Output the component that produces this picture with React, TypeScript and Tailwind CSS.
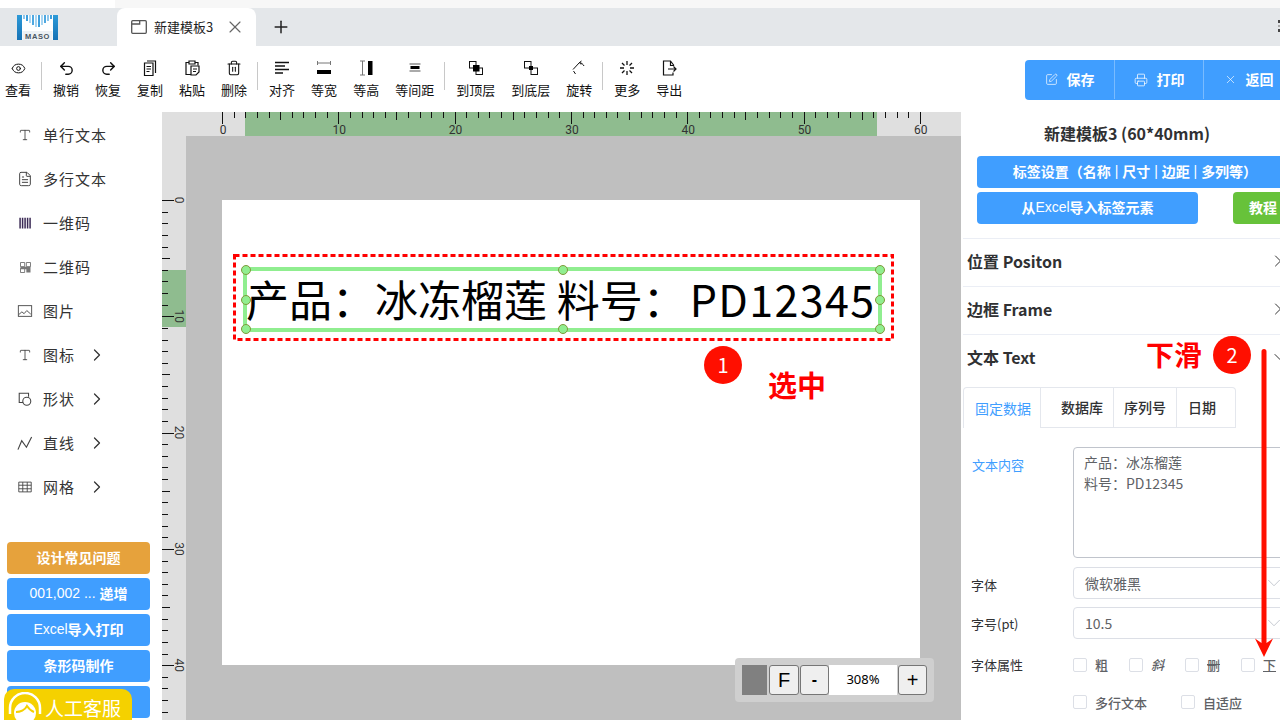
import { ChevronDown, ChevronRight, Eye, FileText, Plus, Printer, Redo2, SquarePen, Trash2, Type, Undo2, X } from "lucide-react";
import type { ReactNode } from "react";

const font = "font-['Noto_Sans_CJK_SC','Noto_Sans',sans-serif]";

function Svg({ children, size = 18 }: { children: ReactNode; size?: number }) {
  return (
    <svg width={size} height={size} viewBox="0 0 18 18" fill="none" stroke="currentColor" strokeWidth="1.2">
      {children}
    </svg>
  );
}

function Latin({ children }: { children: ReactNode }) {
  return <span className="font-['Liberation_Sans',sans-serif] font-normal">{children}</span>;
}

const toolIcons: Record<string, ReactNode> = {
  查看: <Eye size={15} strokeWidth={1.6} />,
  撤销: <Undo2 size={17} strokeWidth={2} />,
  恢复: <Redo2 size={17} strokeWidth={2} />,
  复制: (
    <Svg>
      <path d="M6 2h8.500v12M3.500 4h8.500v12.500H3.500z" />
      <path d="M5.500 7.500h4.500M5.500 10h4.500M5.500 12.500h3" />
    </Svg>
  ),
  粘贴: (
    <Svg>
      <path d="M6 3.500H3v12h5M12 3.500h3v3M6 2h6v3H6z" />
      <path d="M8 7h8v6l-3 3H8zM10 10h4M10 12.500h3" />
    </Svg>
  ),
  删除: <Trash2 size={16} strokeWidth={1.6} />,
  对齐: (
    <Svg>
      <path d="M2 3.500h14M2 7h10M2 10.500h14M2 14h8" strokeWidth="1.600" />
    </Svg>
  ),
  等宽: (
    <Svg>
      <path d="M2.500 2v4M15.500 2v4M2.500 4h13" strokeWidth="1" stroke="#777" />
      <rect x="2" y="11" width="14" height="4" fill="#000" stroke="none" />
    </Svg>
  ),
  等高: (
    <Svg>
      <path d="M3 2h5M3 16h5M5.500 2v14" strokeWidth="1" stroke="#777" />
      <rect x="11" y="2" width="4.500" height="14" fill="#000" stroke="none" />
    </Svg>
  ),
  等间距: (
    <Svg>
      <rect x="3.500" y="4" width="11" height="2" fill="#aaa" stroke="none" />
      <rect x="4.500" y="7" width="9" height="3" fill="#000" stroke="none" />
      <rect x="3.500" y="11" width="11" height="2" fill="#aaa" stroke="none" />
    </Svg>
  ),
  到顶层: (
    <Svg>
      <rect x="2.500" y="2.500" width="6.500" height="6.500" strokeWidth="1" />
      <rect x="9" y="9" width="6.500" height="6.500" strokeWidth="1" />
      <rect x="6" y="6" width="6.500" height="6.500" fill="#000" stroke="none" />
    </Svg>
  ),
  到底层: (
    <Svg>
      <rect x="2.500" y="2.500" width="6.500" height="6.500" strokeWidth="1" />
      <rect x="9" y="9" width="6.500" height="6.500" strokeWidth="1" />
      <rect x="7" y="7" width="4" height="4" fill="#000" stroke="none" />
    </Svg>
  ),
  旋转: (
    <Svg>
      <path d="M3 10.500L9.500 3.500c2 .5 3.500 1.500 4.500 3.500M5.500 15L3.500 12M11.500 2l-2 1.500 1.500 2" strokeWidth="1" />
    </Svg>
  ),
  更多: (
    <Svg>
      <path d="M9 2v4M9 12v4M2 9h4M12 9h4M4 4l2.500 2.500M11.500 11.500L14 14M14 4l-2.500 2.500M6.500 11.500L4 14" strokeWidth="1.300" />
    </Svg>
  ),
  导出: (
    <Svg>
      <path d="M14 6.500L10.500 2H3.500v14H13v-2.500M10.500 2v4.500H14" />
      <path d="M8 10h8M13.500 7.500l2.500 2.500-2.500 2.500" />
    </Svg>
  ),
};

const toolGroups = [["查看"], ["撤销", "恢复", "复制", "粘贴", "删除"], ["对齐", "等宽", "等高", "等间距"], ["到顶层", "到底层", "旋转"], ["更多", "导出"]];

function Toolbar() {
  return (
    <div className="flex h-[66px] bg-white">
      <div className="ml-[-3px] flex items-start pt-[10px]">
        {toolGroups.map((group, i) => (
          <div key={group[0]} className="flex items-center">
            {i > 0 && <div className="ml-[2px] mr-[3px] h-[28px] w-px -translate-y-[2px] bg-[#c8c8c8]" />}
            {group.map((name) => (
              <div key={name} className="mx-2 flex flex-col items-center">
                <div className="flex h-[24px] items-center justify-center text-[#111]">{toolIcons[name]}</div>
                <div className="mt-[1px] text-[13px] leading-[18px] text-[#111]">{name}</div>
              </div>
            ))}
          </div>
        ))}
      </div>
      <div className="ml-auto mt-[14px] flex h-[40px] w-[255px] shrink-0 overflow-hidden rounded-l-[4px] bg-[#409eff] pb-[1px] text-[14px] font-bold text-white">
        <div className="flex w-[90px] shrink-0 items-center justify-center gap-[9px] border-r border-[#79bbff]">
          <SquarePen size={13} strokeWidth={1.3} />
          保存
        </div>
        <div className="flex w-[89px] shrink-0 items-center justify-center gap-[9px] border-r border-[#79bbff]">
          <Printer size={14} strokeWidth={1.3} />
          打印
        </div>
        <div className="flex w-[89px] shrink-0 items-center justify-center gap-[9px]">
          <X size={13} strokeWidth={1.2} />
          返回
        </div>
      </div>
    </div>
  );
}

const sideItems: { name: string; icon: ReactNode; more?: boolean }[] = [
  { name: "单行文本", icon: <Type size={14} strokeWidth={1.5} /> },
  { name: "多行文本", icon: <FileText size={16} strokeWidth={1.5} /> },
  {
    name: "一维码",
    icon: (
      <Svg size={15}>
        <path d="M2.500 2v13M5.500 2v13M8.500 2v13M11.500 2v13M14.500 2v13" strokeWidth="1.800" stroke="#3b2a55" />
      </Svg>
    ),
  },
  {
    name: "二维码",
    icon: (
      <Svg size={15}>
        <path d="M3 3h5v5H3zM10 3h5v5h-5zM3 10h5v5H3z" strokeWidth="1" stroke="#666" />
        <path d="M3 8h12v3H3zM10 11h5v4h-5z" fill="#777" stroke="none" />
      </Svg>
    ),
  },
  {
    name: "图片",
    icon: (
      <Svg size={16}>
        <rect x="1.500" y="3" width="15" height="12" strokeWidth="1" />
        <path d="M2 13l3.500-3 2.500 2 3-3.500 4.500 4" strokeWidth="1" />
      </Svg>
    ),
  },
  { name: "图标", icon: <Type size={14} strokeWidth={1.5} />, more: true },
  {
    name: "形状",
    icon: (
      <Svg size={16}>
        <path d="M7 13H2.500V2.500H13v4" />
        <circle cx="11" cy="11.500" r="4.500" />
      </Svg>
    ),
    more: true,
  },
  {
    name: "直线",
    icon: (
      <Svg size={17}>
        <path d="M1 15.500L5 6l5 7 5.500-11" />
      </Svg>
    ),
    more: true,
  },
  {
    name: "网格",
    icon: (
      <Svg size={16}>
        <path d="M2 3.500h14v11H2zM2 7h14M2 11h14M6.500 3.500v11M11.500 3.500v11" strokeWidth="1" />
      </Svg>
    ),
    more: true,
  },
];

function Sidebar() {
  const sideButton = "flex h-[32px] items-center justify-center rounded-[4px] bg-[#409eff] pb-[2px] text-[14px] font-bold text-white";
  return (
    <div className="relative flex w-[162px] shrink-0 flex-col bg-white">
      <div className="pt-[1px]">
        {sideItems.map((item) => (
          <div key={item.name} className="flex h-[44px] items-center text-[15px] text-[#333]">
            <div className="flex w-[43px] shrink-0 justify-center pl-[7px] text-[#444]">{item.icon}</div>
            <span className="tracking-[1px]">{item.name}</span>
            {item.more && <ChevronRight size={20} strokeWidth={1.5} className="ml-[12px]" />}
          </div>
        ))}
      </div>
      <div className="mt-auto flex w-[157px] flex-col gap-1 pb-[2px] pl-[7px] pr-[7px]">
        <div className={`${sideButton} !bg-[#e6a23c]`}>设计常见问题</div>
        <div className={sideButton}>
          <Latin>001,002 ...&nbsp;</Latin>递增
        </div>
        <div className={sideButton}>
          <Latin>Excel</Latin>导入打印
        </div>
        <div className={sideButton}>条形码制作</div>
        <div className={sideButton} />
      </div>
      <div className="absolute bottom-0 left-[4px] flex h-[31px] w-[128px] items-start rounded-t-[10px] bg-[#f5d100] pl-[3px] text-[19px] leading-[19px] text-white">
        <svg className="mt-[3px] shrink-0" width="36" height="28" viewBox="0 0 36 28" fill="none" stroke="#fff" strokeWidth="2.500">
          <path d="M3 22V16a15 15 0 0 1 30 0v6" />
          <circle cx="18" cy="21" r="11" fill="#fff" stroke="none" />
          <path d="M9 20c4 0 9-2 11-6 2 3 4 5 7 6" stroke="#f5d100" strokeWidth="2" />
        </svg>
        <span className="ml-[2px] mt-[9px]">人工客服</span>
      </div>
    </div>
  );
}

const mm = 11.63;
const ticks = Array.from({ length: 61 }, (_, i) => i);

function TopRuler() {
  return (
    <div className="relative h-[24px] bg-[#dfdfdf]">
      <div className="absolute left-[83px] top-0 h-full w-[632px] bg-[#8fbc8f]" />
      <svg className="absolute inset-0" width="799" height="24" style={{ fontFamily: "Roboto, sans-serif" }}>
        {ticks.map((i) => {
          const x = Math.round(60 + i * mm) + 0.5;
          const h = i % 10 === 0 ? 12 : i % 5 === 0 ? 8 : 6;
          return <line key={i} x1={x} x2={x} y1={0} y2={h} stroke="#111" strokeWidth="1" />;
        })}
        {ticks
          .filter((i) => i % 10 === 0)
          .map((i) => (
            <text key={i} x={61 + i * mm} y={22} fontSize="12" textAnchor="middle" fill="#333">
              {i}
            </text>
          ))}
      </svg>
    </div>
  );
}

function LeftRuler() {
  const rows = Array.from({ length: 45 }, (_, i) => i);
  return (
    <div className="relative w-[24px] shrink-0 bg-[#dfdfdf]">
      <div className="absolute left-0 top-[134px] h-[57px] w-full bg-[#8fbc8f]" />
      <svg className="absolute inset-0" width="24" height="584" style={{ fontFamily: "Roboto, sans-serif" }}>
        {rows.map((i) => {
          const y = Math.round(64 + i * mm) + 0.5;
          const w = i % 10 === 0 ? 12 : i % 5 === 0 ? 8 : 6;
          return <line key={i} x1={0} x2={w} y1={y} y2={y} stroke="#111" strokeWidth="1" />;
        })}
        {rows
          .filter((i) => i % 10 === 0)
          .map((i) => {
            const y = 64 + i * mm;
            return (
              <text key={i} x={17} y={y} fontSize="12" textAnchor="middle" fill="#333" transform={`rotate(90 17 ${y}) translate(0 4)`}>
                {i}
              </text>
            );
          })}
      </svg>
    </div>
  );
}

function Handle({ className }: { className: string }) {
  return <div className={`absolute h-[10px] w-[10px] rounded-full border border-[#7f9a3a] bg-[#90ee90] ${className}`} />;
}

function Canvas() {
  return (
    <div className="relative min-w-0 flex-1 overflow-hidden bg-[#bfbfbf]">
      <div className="absolute left-[36px] top-[64px] h-[465px] w-[698px] bg-white">
        <svg className="absolute left-[11px] top-[54px]" width="661" height="87" fill="none">
          <rect x="1.500" y="1.500" width="658" height="84" stroke="#ff0000" strokeWidth="3" strokeDasharray="5 3" />
        </svg>
        <div className="absolute left-[21px] top-[67px] h-[65px] w-[639px] border-4 border-[#90ee90]" />
        <div className="absolute left-[24px] top-[66px] whitespace-nowrap text-[43px] leading-[64px] text-black">
          产品：冰冻榴莲 料号：<span className="ml-[4px] tracking-[1.4px]">PD12345</span>
        </div>
        <Handle className="left-[19px] top-[65px]" />
        <Handle className="left-[336px] top-[65px]" />
        <Handle className="left-[653px] top-[65px]" />
        <Handle className="left-[19px] top-[95px]" />
        <Handle className="left-[653px] top-[95px]" />
        <Handle className="left-[19px] top-[124px]" />
        <Handle className="left-[336px] top-[124px]" />
        <Handle className="left-[653px] top-[124px]" />
        <div className="absolute left-[482px] top-[146px] flex h-[38px] w-[38px] items-center justify-center rounded-full bg-[#ff0f00] text-[20px] text-white">1</div>
        <div className="absolute left-[546px] top-[164px] text-[29px] font-bold leading-[40px] text-[#ff0000]">选中</div>
      </div>
      <div className="absolute left-[549px] top-[522px] flex h-[44px] w-[199px] items-center rounded-[4px] bg-[#cfcfcf] pl-[7px] font-['Liberation_Sans',sans-serif]">
        <div className="h-[30px] w-[25px] bg-[#808080]" />
        <div className="ml-[2px] flex h-[30px] w-[30px] items-center justify-center rounded-[3px] border border-[#767676] bg-[#efefef] text-[20px] text-black">F</div>
        <div className="ml-[1px] flex h-[30px] w-[29px] items-center justify-center rounded-[3px] border border-[#767676] bg-[#efefef] text-[16px] font-bold text-black">-</div>
        <div className="flex h-[30px] w-[68px] items-center justify-center bg-white font-['Noto_Sans'] text-[13px] text-black">308%</div>
        <div className="ml-[1px] flex h-[30px] w-[29px] items-center justify-center rounded-[3px] border border-[#767676] bg-[#efefef] text-[20px] text-black">+</div>
      </div>
    </div>
  );
}

function Section({ title, open }: { title: string; open?: boolean }) {
  return (
    <div className={`flex items-center justify-between pb-[3px] pl-[4px] text-[16px] font-bold text-[#303133] ${open ? "h-[47px]" : "h-[48px] border-b border-[#ebeef5]"}`}>
      {title}
      {open ? (
        <ChevronDown size={20} strokeWidth={1.2} className="mr-[-8px] shrink-0 text-[#333]" />
      ) : (
        <ChevronRight size={20} strokeWidth={1.2} className="mr-[-6px] shrink-0 text-[#333]" />
      )}
    </div>
  );
}

function Check({ label, className, labelClass }: { label: string; className: string; labelClass?: string }) {
  return (
    <label className={`flex shrink-0 items-center ${className}`}>
      <span className="h-[14px] w-[14px] shrink-0 rounded-[2px] border border-[#dcdfe6] bg-white" />
      <span className={`ml-2 text-[13px] font-medium text-[#606266] ${labelClass ?? ""}`}>{label}</span>
    </label>
  );
}

function FormSelect({ value }: { value: string }) {
  return (
    <div className="flex h-[32px] w-[213px] shrink-0 items-center justify-between rounded-[4px] border border-[#dcdfe6] pl-[11px] text-[14px] text-[#606266]">
      {value}
      <ChevronDown size={22} strokeWidth={1} className="text-[#c0c4cc]" />
    </div>
  );
}

function RightPanel() {
  return (
    <div className="w-[319px] shrink-0 overflow-hidden bg-white">
      <div className="w-[332px]">
        <div className="flex h-[44px] items-center justify-center pb-[2px] text-[16px] font-bold text-[#303133]">新建模板3 (60*40mm)</div>
        <div className="px-[16px]">
          <div className="flex h-[32px] w-[316px] items-center justify-center rounded-[4px] bg-[#409eff] pb-[2px] text-[14px] font-bold text-white">
            标签设置（名称 <Latin>&nbsp;|&nbsp;</Latin> 尺寸 <Latin>&nbsp;|&nbsp;</Latin> 边距 <Latin>&nbsp;|&nbsp;</Latin> 多列等）
          </div>
          <div className="mt-1 flex">
            <div className="flex h-[32px] w-[221px] shrink-0 items-center justify-center rounded-[4px] bg-[#409eff] pb-[2px] text-[14px] font-bold text-white">
              从<Latin>Excel</Latin>导入标签元素
            </div>
            <div className="ml-[35px] flex h-[32px] w-[60px] shrink-0 items-center justify-center rounded-[4px] bg-[#67c23a] pb-[2px] text-[14px] font-bold text-white">教程</div>
          </div>
        </div>
        <div className="ml-[2px] mt-[14px] border-t border-[#ebeef5]">
          <div className="w-[319px]">
            <Section title="位置 Positon" />
            <Section title="边框 Frame" />
            <Section title="文本 Text" open />
          </div>
          <div className="mt-[5px] flex h-[41px] w-[273px] text-[14px] font-medium text-[#303133]">
            <div className="flex w-[78px] items-center rounded-tl-[4px] border-x border-t border-[#e4e7ed] pl-[11px] font-normal text-[#409eff]">固定数据</div>
            <div className="flex w-[73px] items-center justify-end border-y border-r border-[#e4e7ed] pr-[10px]">数据库</div>
            <div className="flex w-[63px] items-center border-y border-r border-[#e4e7ed] pl-[10px]">序列号</div>
            <div className="flex flex-1 items-center rounded-tr-[4px] border-y border-r border-[#e4e7ed] pl-[11px]">日期</div>
          </div>
          <div className="mt-[19px] flex">
            <div className="w-[110px] shrink-0 pl-[9px] pt-[9px] text-[13px] leading-[18px] text-[#409eff]">文本内容</div>
            <div className="h-[111px] w-[213px] shrink-0 whitespace-pre-line rounded-[4px] border border-[#c0c4cc] px-[10px] py-[4px] text-[14px] leading-[21px] text-[#606266]">
              {"产品：冰冻榴莲\n料号：PD12345"}
            </div>
          </div>
          <div className="mt-[9px] flex items-center">
            <div className="w-[110px] shrink-0 pl-[8px] pt-[4px] text-[13px] text-[#303133]">字体</div>
            <FormSelect value="微软雅黑" />
          </div>
          <div className="mt-[8px] flex items-center">
            <div className="w-[110px] shrink-0 pl-[8px] pt-[2px] text-[13px] text-[#303133]">字号(pt)</div>
            <FormSelect value="10.5" />
          </div>
          <div className="mt-[16px] flex items-center">
            <div className="w-[110px] shrink-0 pl-[8px] text-[13px] text-[#303133]">字体属性</div>
            <Check label="粗" className="w-[56px]" labelClass="font-bold" />
            <Check label="斜" className="w-[56px]" labelClass="italic" />
            <Check label="删" className="w-[56px]" labelClass="line-through" />
            <Check label="下" className="w-[56px]" labelClass="underline" />
          </div>
          <div className="mt-[18px] flex items-center pl-[110px]">
            <Check label="多行文本" className="w-[108px]" />
            <Check label="自适应" className="w-[100px]" />
          </div>
        </div>
      </div>
    </div>
  );
}

function Annotations() {
  return (
    <div className="pointer-events-none absolute inset-0">
      <div className="absolute left-[1146px] top-[334px] text-[28px] font-bold leading-[40px] text-[#ff0000]">下滑</div>
      <div className="absolute left-[1213px] top-[336px] flex h-[38px] w-[38px] items-center justify-center rounded-full bg-[#ff0f00] text-[20px] text-white">2</div>
      <svg className="absolute left-[1250px] top-[345px]" width="30" height="315" viewBox="0 0 30 315" fill="#ff0f00">
        <path d="M11.500 6.500a2.500 2.500 0 0 1 5 0V298L23 293.500 14 312 5 293.500 11.500 298z" />
      </svg>
    </div>
  );
}

function Logo() {
  const stripes: [number, number, string][] = [
    [7, 3, "#8cc6ec"],
    [10, 5, "#3f9fdc"],
    [13, 7, "#a9d5f1"],
    [16, 9, "#4fa8e0"],
    [19, 11, "#a9d5f1"],
    [22, 11, "#3f9fdc"],
    [25, 9, "#a9d5f1"],
    [28, 7, "#4fa8e0"],
    [31, 5, "#8cc6ec"],
    [34, 3, "#3f9fdc"],
  ];
  return (
    <svg width="41" height="25" viewBox="0 0 41 25">
      <defs>
        <linearGradient id="maso" x1="0" x2="0" y1="0" y2="1">
          <stop offset="0" stopColor="#2c9ad8" />
          <stop offset="1" stopColor="#1672b5" />
        </linearGradient>
      </defs>
      <rect width="41" height="25" fill="url(#maso)" />
      <rect x="5" width="31" height="25" fill="#fff" />
      {stripes.map(([x, h, c]) => (
        <rect key={x} x={x - 1} y="0" width="2" height={h + 1} fill={c} />
      ))}
      <rect x="5.500" y="16" width="30" height="9" fill="#edf1f4" />
      <text x="20.500" y="23.500" fontSize="7.500" fontWeight="700" letterSpacing="0.6" textAnchor="middle" fill="#4a5560" fontFamily="Liberation Sans, sans-serif">
        MASO
      </text>
    </svg>
  );
}

export default function App() {
  return (
    <div className={`relative flex h-[720px] w-[1280px] flex-col overflow-hidden bg-white ${font}`}>
      <div className="h-2 bg-[#f7f7f7]">
        <div className="h-2 w-[115px] bg-white" />
      </div>
      <div className="relative flex h-[38px] items-stretch bg-[#e4e7ea]">
        <div className="flex w-[117px] items-center pl-[17px]">
          <Logo />
        </div>
        <div className="flex w-[139px] items-center rounded-t-[8px] bg-white pl-[14px] text-[13px] text-[#222]">
          <svg width="16" height="14" viewBox="0 0 16 14" fill="none" stroke="#555" strokeWidth="1.300">
            <rect x="0.700" y="0.700" width="14.600" height="12.600" rx="1" />
            <path d="M0.700 4h8V0.700" />
          </svg>
          <span className="ml-[7px]">新建模板3</span>
          <X size={20} strokeWidth={1.4} className="ml-[12px] text-[#666]" />
        </div>
        <div className="ml-[15px] flex items-center">
          <Plus size={20} strokeWidth={1.8} className="text-[#222]" />
        </div>
        <div className="absolute right-0 top-[12px] flex w-[2px] flex-col gap-[2px]">
          <div className="h-[3px] bg-[#444]" />
          <div className="h-[2px] bg-[#aaa]" />
          <div className="h-[3px] bg-[#444]" />
        </div>
      </div>
      <Toolbar />
      <div className="flex min-h-0 flex-1">
        <Sidebar />
        <div className="flex min-w-0 flex-1 flex-col">
          <TopRuler />
          <div className="flex min-h-0 flex-1">
            <LeftRuler />
            <Canvas />
          </div>
        </div>
        <RightPanel />
      </div>
      <Annotations />
    </div>
  );
}
